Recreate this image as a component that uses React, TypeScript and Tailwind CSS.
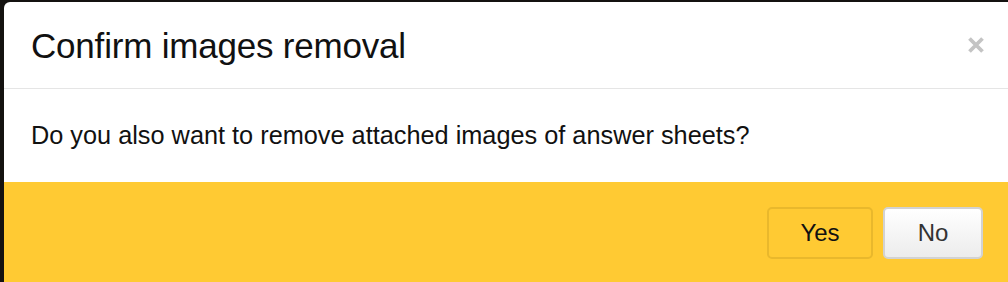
export default function App() {
  return (
    <div className="h-[282px] w-[1008px] overflow-hidden bg-[#141210] pl-[4px] pt-[2px] font-['Liberation_Sans',Arial,sans-serif]">
      <div className="w-[1020px] h-[300px] rounded-tl-[6px] bg-white overflow-hidden">
        {/* Header */}
        <div className="flex h-[87px] items-center justify-between border-b border-[#e5e5e5] pl-[27px] pr-[39px]">
          <h4 className="text-[35px] leading-none text-[#111] tracking-[-0.2px]">Confirm images removal</h4>
          <button className="text-[#c4c4c4]" aria-label="Close">
            <svg width="18" height="18" viewBox="0 0 18 18">
              <path d="M2.5 2.5 L15.5 15.5 M15.5 2.5 L2.5 15.5" stroke="currentColor" strokeWidth="3.8" />
            </svg>
          </button>
        </div>

        {/* Body */}
        <div className="flex h-[93px] items-center pl-[27px]">
          <p className="text-[25.3px] leading-none text-[#111]">Do you also want to remove attached images of answer sheets?</p>
        </div>

        {/* Footer */}
        <div className="flex h-[120px] items-start justify-start bg-[#ffca33] pl-[763px] pt-[25px] gap-[10px]">
          <button className="h-[52px] w-[106px] rounded-[5px] border-2 border-[#e9b82c] bg-[#ffca33] text-[24px] text-[#111]">
            Yes
          </button>
          <button className="h-[52px] w-[100px] rounded-[5px] border-2 border-[#d2d2d2] bg-gradient-to-b from-white to-[#ececec] text-[24px] text-[#333]">
            No
          </button>
        </div>
      </div>
    </div>
  );
}
